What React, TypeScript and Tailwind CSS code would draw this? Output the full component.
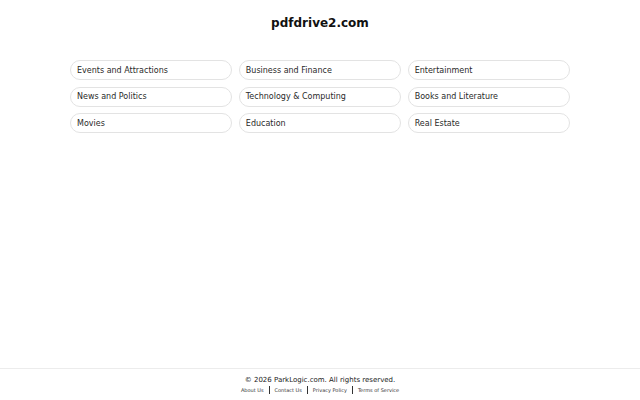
import React from 'react';

const categories = [
  'Events and Attractions',
  'Business and Finance',
  'Entertainment',
  'News and Politics',
  'Technology & Computing',
  'Books and Literature',
  'Movies',
  'Education',
  'Real Estate',
];

const links = ['About Us', 'Contact Us', 'Privacy Policy', 'Terms of Service'];

export default function App() {
  return (
    <div className="min-h-screen flex flex-col bg-white text-[#222] font-['DejaVu_Sans',sans-serif]">
      <header className="pt-[15px] text-center">
        <h1 className="text-[12px] leading-[16px] font-bold text-[#111]">pdfdrive2.com</h1>
      </header>

      <main className="flex-1 pt-[29px]">
        <div className="mx-auto w-[500px] grid grid-cols-3 gap-x-[6.5px] gap-y-[6.5px]">
          {categories.map((c) => (
            <a
              key={c}
              href="#"
              className="h-[20px] flex items-center pl-[6px] pt-[1px] rounded-full border border-[#e3e3e3] text-[8px] text-[#2a2a2a]"
            >
              {c}
            </a>
          ))}
        </div>
      </main>

      <footer className="h-[32px] border-t border-[#ececec] flex flex-col items-center pt-[7px]">
        <p className="text-[7px] leading-[9px] text-[#222]">© 2026 ParkLogic.com. All rights reserved.</p>
        <div className="flex items-center mt-[1px]">
          {links.map((l, i) => (
            <React.Fragment key={l}>
              {i > 0 && <span className="mx-[5px] w-px h-[8px] bg-[#333]" />}
              <a href="#" className="text-[5px] leading-[8px] text-[#333]">{l}</a>
            </React.Fragment>
          ))}
        </div>
      </footer>
    </div>
  );
}
